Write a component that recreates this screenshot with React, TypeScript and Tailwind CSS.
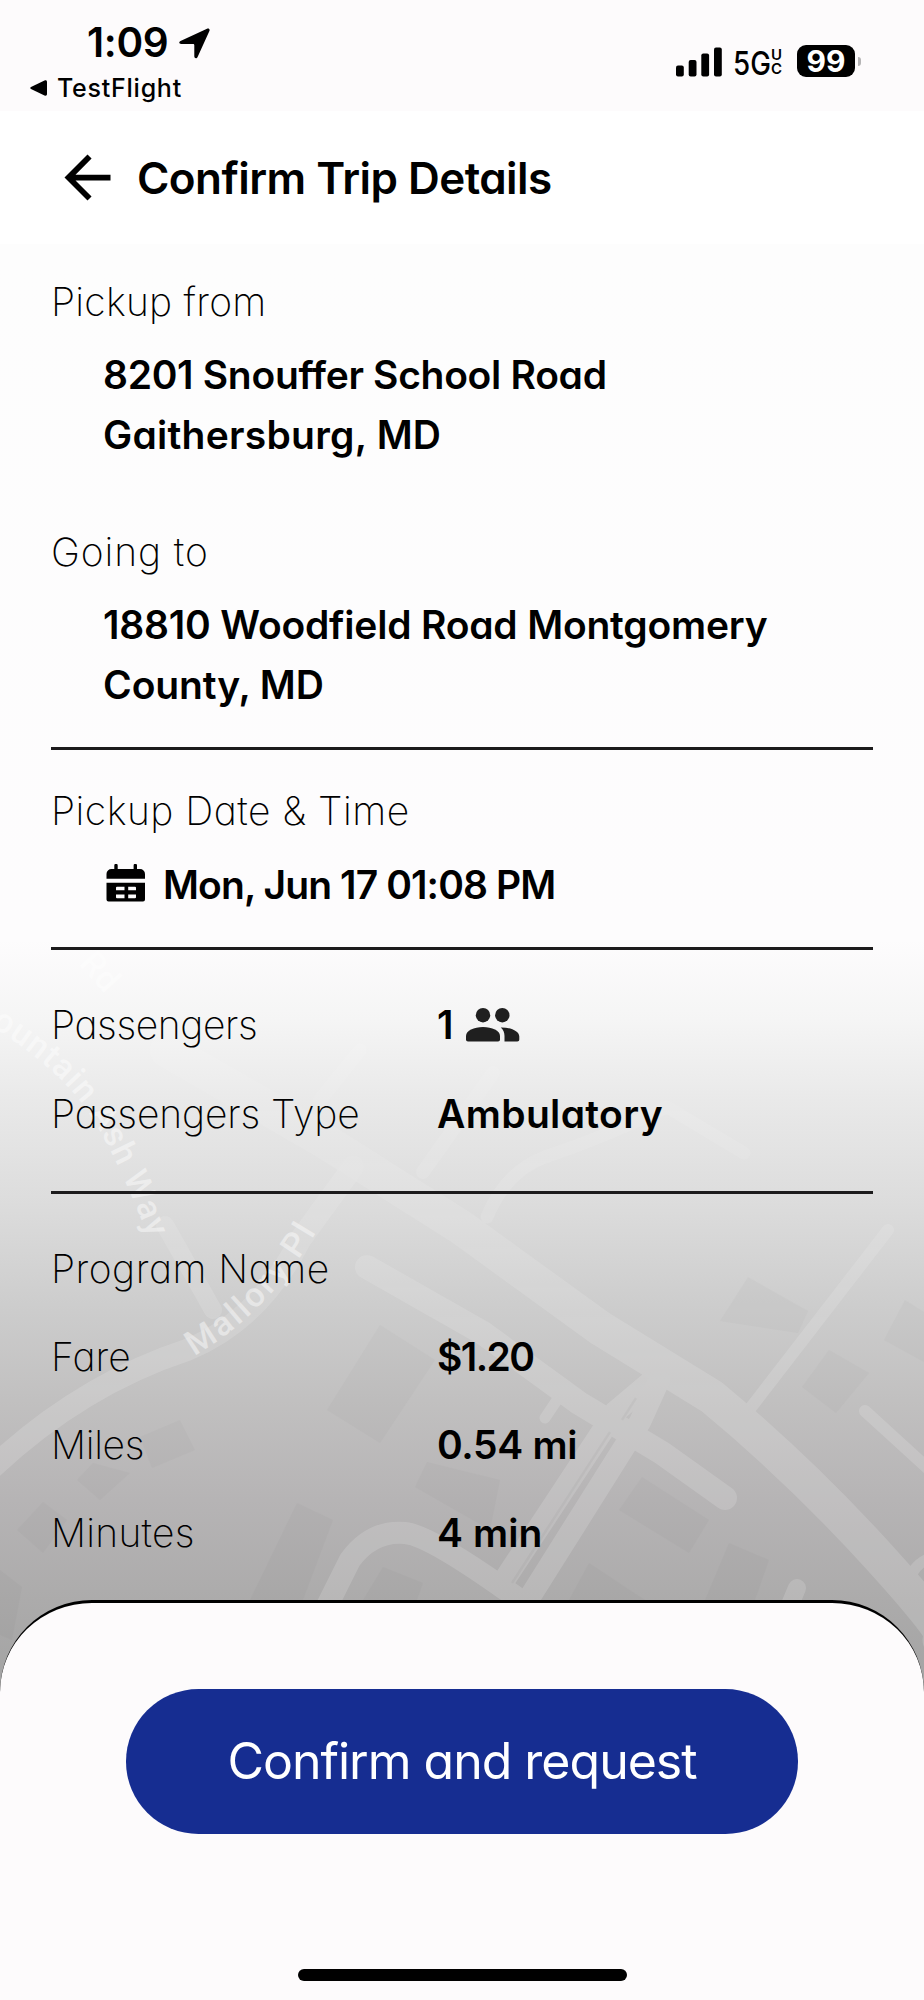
import React from "react";
import { MdArrowBack } from "react-icons/md";

const thin = "font-extralight text-[39px] leading-[60px] whitespace-nowrap";
const strong = "font-semibold text-[39px] leading-[60px] whitespace-nowrap";

const StatusBar: React.FC = () => (
  <div className="flex h-[111px] justify-between bg-[#fdfbfc] pr-[63px] pl-[30px]">
    <div className="pt-[19px]">
      <div className="flex h-[48px] items-center pl-[57px]">
        <span className="w-[92px] text-[40.5px] leading-[48px] font-semibold tracking-[-0.3px]">1:09</span>
        <svg width="31" height="31" viewBox="0 0 31 31">
          <path
            d="M1.500 12.900 28 .7c1.800-.8 3.200.6 2.400 2.400L18.600 29c-.9 2-3.300 1.500-3.300-.7V17.200c0-.9-.4-1.300-1.300-1.300H2.200C0 15.900-.5 13.800 1.500 12.900z"
            fill="#000"
          />
        </svg>
      </div>
      <div className="flex h-[42px] items-center gap-[10px]">
        <svg width="17" height="16" viewBox="0 0 17 16">
          <path d="M1 7 14.500.5C16 0 17 .5 17 2v12c0 1.500-1 2-2.500 1.500L1 9C0 8.500 0 7.500 1 7z" fill="#000" />
        </svg>
        <span className="text-[25px] leading-[42px] font-medium tracking-[0.75px]">TestFlight</span>
      </div>
    </div>

    <div className="box-content flex h-[32px] items-center pt-[45px]">
      <svg width="46" height="30" viewBox="0 0 46 30" className="mt-[1px] mr-[11px]">
        <rect x="0" y="18.500" width="7.800" height="11" rx="2" />
        <rect x="12.700" y="13" width="7.800" height="16.500" rx="2" />
        <rect x="25.300" y="6.500" width="7.800" height="23" rx="2" />
        <rect x="38" y="0.500" width="7.800" height="29" rx="2" />
      </svg>
      <span className="mt-[3px] w-[38px] origin-left scale-x-[0.84] text-[33px] leading-[32px] font-medium whitespace-nowrap">
        5G
      </span>
      <span className="mt-[2px] mr-[12px] flex w-[14px] flex-col text-[15px] leading-[14px] font-semibold">
        <span>U</span>
        <span>C</span>
      </span>
      <div className="flex h-[32px] w-[58px] items-center justify-center rounded-[9px] bg-black text-[30px] leading-[32px] font-bold text-white">
        99
      </div>
      <div className="ml-[3px] h-[9px] w-[3px] rounded-r-full bg-[#b5b4b5]" />
    </div>
  </div>
);

const CalendarIcon: React.FC = () => (
  <svg width="39" height="38" viewBox="0 0 39 38" className="mr-[18px] mb-[4px] ml-[4px]">
    <path d="M8.300 1.500a1.700 1.700 0 0 1 3.400 0V5h15.900V1.500a1.700 1.700 0 0 1 3.400 0V5h3a5 5 0 0 1 5 5v4.800H.5V10a5 5 0 0 1 5-5h2.800z" />
    <path
      fillRule="evenodd"
      d="M.5 18.800H39V35.500a2 2 0 0 1-2 2H2.500a2 2 0 0 1-2-2zM11 22.700a1 1 0 0 0-1 1v2.600h8.500v-3.600zm11.200 0v3.600h7.800v-2.600a1 1 0 0 0-1-1zM10 30.400v2.800a1 1 0 0 0 1 1h7.500v-3.800zm12.200 0v3.800H29a1 1 0 0 0 1-1v-2.800z"
    />
  </svg>
);

const PeopleIcon: React.FC = () => (
  <svg width="54" height="34" viewBox="0 0 54 34" fill="#1f1f1f">
    <circle cx="17" cy="7.200" r="7.200" />
    <circle cx="36.300" cy="7.200" r="7.200" />
    <path d="M0 28c0-5.500 8-9 17-9s17 3.500 17 9v3.500c0 1.200-.8 2-2 2H2c-1.200 0-2-.8-2-2z" />
    <path d="M34.800 19.400C44 19.200 53.300 23 53.300 28.500v3c0 1.200-.8 2-2 2H38.500V28c0-3.800-1.200-6.600-3.700-8.600z" />
  </svg>
);

// faded street map behind the lower half of the details
const MapBackdrop: React.FC = () => (
  <svg
    className="absolute inset-x-0 top-[900px]"
    width="924"
    height="840"
    viewBox="0 900 924 840"
    fill="none"
  >
    <defs>
      <linearGradient id="fade" gradientUnits="userSpaceOnUse" x1="0" y1="1050" x2="0" y2="1400">
        <stop offset="0" stopColor="#fff" stopOpacity="0.5" />
        <stop offset="1" stopColor="#fff" stopOpacity="1" />
      </linearGradient>
    </defs>
    <g fill="#000" opacity="0.016">
      <path d="M180 1420l15 30-43 18-12-31zM93 1463l37 10-30 27-23-20zM43 1502l24 18-24 33-26-23z" />
      <path d="M297 1503l36 17-30 80h-53zM383 1567l40 16-6 17h-54zM380 1325l55 35-55 83-53-33z" />
      <path d="M427 1462l73 18-10 50-75-43zM642 1477l67 43-20 33-70-43zM729 1543l40 17-14 40h-50z" />
      <path d="M589 1563l56 37h-76zM0 1570l22 17-10 53-12-5zM829 1350l40 23-33 40-34-26z" />
      <path d="M748 1277l60 34-10 22-78-12zM905 1300l19 12v50l-40-22z" />
    </g>
    <g stroke="url(#fade)" strokeLinecap="round" strokeLinejoin="round" opacity="0.15">
      <path d="M167 1050L323 1140L462 1228L600 1328L712 1397Q800 1470 879 1557T940 1640" strokeWidth="35" />
      <path d="M367 1267L483 1333L579 1403L662 1453L725 1498" strokeWidth="24" />
      <path d="M659 1375L615 1412L501 1585" strokeWidth="22" />
      <path d="M659 1380L640 1422L528 1600" strokeWidth="22" />
      <path d="M888 1230L749 1410" strokeWidth="12" />
      <path d="M744 1153L667 1107Q610 1135 545 1157Q505 1172 487 1217" strokeWidth="13" />
      <path d="M423 1172L493 1073M360 1050L320 1100" strokeWidth="14" />
      <path d="M353 1167L300 1240Q260 1320 187 1350Q80 1385 -10 1470" strokeWidth="22" />
      <path d="M165 1225L213 1310" strokeWidth="18" />
      <path d="M865 1411L935 1475" strokeWidth="12" />
      <path d="M325 1610L350 1560Q372 1530 405 1533Q430 1535 520 1600" strokeWidth="22" />
      <path d="M797 1588L787 1612" strokeWidth="18" />
      <path d="M559 1397L545 1418M930 1558Q912 1565 908 1585" strokeWidth="11" />
    </g>
    <path d="M636 1398L622 1420M610 1432L512 1583" stroke="#000" strokeWidth="2.500" opacity="0.03" />
    <path id="ash" d="M-36 1010Q58 1063 92 1118Q122 1166 156 1258" />
    <path id="mallory" d="M194 1356Q273 1310 322 1222" />
    <g fill="#fff" fontFamily="Roboto, 'Open Sans', sans-serif" fontWeight="500" fontSize="34">
      <text opacity="0.45">
        <textPath href="#ash" textLength="302">Mountain Ash Way</textPath>
      </text>
      <text opacity="0.45">
        <textPath href="#mallory" textLength="176">Mallory Pl</textPath>
      </text>
      <text transform="translate(78 964) rotate(48)" opacity="0.45">Rd</text>
    </g>
  </svg>
);

const Divider: React.FC<{ className?: string }> = ({ className = "" }) => (
  <div className={`h-[3px] bg-[#1c1b1c] ${className}`} />
);

interface DetailProps {
  label: string;
  labelClass?: string;
  valueClass?: string;
  children?: React.ReactNode;
}

const Detail: React.FC<DetailProps> = ({ label, labelClass = "", valueClass = "", children }) => (
  <div className="grid h-[60px] grid-cols-[386px_1fr]">
    <span className={`${thin} ${labelClass}`}>{label}</span>
    <span className={`${strong} ${valueClass}`}>{children}</span>
  </div>
);

const App: React.FC = () => (
  <div className="relative flex h-[2000px] w-[924px] flex-col overflow-hidden bg-[#fdfbfc] font-['Inter',sans-serif] text-black [font-feature-settings:'cv11']">
    <StatusBar />

    <header className="flex h-[133px] items-center bg-white pl-[53px]">
      <MdArrowBack size={69} />
      <h1 className="ml-[15px] text-[44px] leading-[60px] font-semibold tracking-[-0.55px] whitespace-nowrap">
        Confirm Trip Details
      </h1>
    </header>

    <div className="flex-1 bg-[linear-gradient(180deg,#fdfdfd_0px,#fdfcfd_696px,#f5f5f5_776px,#e9e9e9_856px,#dcdcdc_960px,#cdcdcd_1060px,#c1c0c0_1156px,#b6b4b5_1256px,#acabab_1356px,#a2a2a2_1456px)]">
      <MapBackdrop />
      <main className="relative flex flex-col px-[51px] pt-[28px]">
        <span className={`${thin} tracking-[0.25px]`}>Pickup from</span>
        <div className="mt-[13px] flex flex-col pl-[52px]">
          <span className={`${strong} tracking-[-0.3px]`}>8201 Snouffer School Road</span>
          <span className={`${strong} tracking-[0.25px]`}>Gaithersburg, MD</span>
        </div>
        <span className={`${thin} mt-[57px] tracking-[0.9px]`}>Going to</span>
        <div className="mt-[13px] flex flex-col pl-[52px]">
          <span className={`${strong} tracking-[-0.2px]`}>18810 Woodfield Road Montgomery</span>
          <span className={`${strong} tracking-[-0.1px]`}>County, MD</span>
        </div>

        <Divider className="mt-[32px]" />

        <span className={`${thin} mt-[31px] tracking-[0.5px]`}>Pickup Date &amp; Time</span>
        <div className="mt-[14px] flex h-[60px] items-center pl-[51px]">
          <CalendarIcon />
          <span className={`${strong} tracking-[-0.9px]`}>Mon, Jun 17 01:08 PM</span>
        </div>

        <Divider className="mt-[32px]" />

        <div className="mt-[45px] flex flex-col gap-[29px]">
          <Detail label="Passengers" labelClass="tracking-[-0.4px]">
            <span className="flex h-[60px] items-center gap-[12px]">
              1 <PeopleIcon />
            </span>
          </Detail>
          <Detail label="Passengers Type" labelClass="tracking-[-0.1px]" valueClass="tracking-[0.35px]">
            Ambulatory
          </Detail>
        </div>

        <Divider className="mt-[47px]" />

        <div className="mt-[45px] flex flex-col gap-[28px]">
          <Detail label="Program Name" labelClass="tracking-[0.5px]" />
          <Detail label="Fare" labelClass="tracking-[0.1px]" valueClass="tracking-[-1.6px]">
            $1.20
          </Detail>
          <Detail label="Miles" labelClass="tracking-[-0.3px]" valueClass="tracking-[-0.3px]">
            0.54 mi
          </Detail>
          <Detail label="Minutes" labelClass="tracking-[0.25px]" valueClass="tracking-[0.1px]">
            4 min
          </Detail>
        </div>
      </main>
    </div>

    <footer className="absolute inset-x-0 bottom-0 flex h-[400px] flex-col items-center rounded-t-[92px] border-t-[3px] border-black bg-[#fdfbfc]">
      <button className="mt-[86px] h-[145px] w-[672px] rounded-full bg-[#162d91] text-[50px] font-normal tracking-[-1px] text-white">
        Confirm and request
      </button>
      <div className="mt-[135px] h-[12px] w-[329px] rounded-full bg-black" />
    </footer>
  </div>
);

export default App;
